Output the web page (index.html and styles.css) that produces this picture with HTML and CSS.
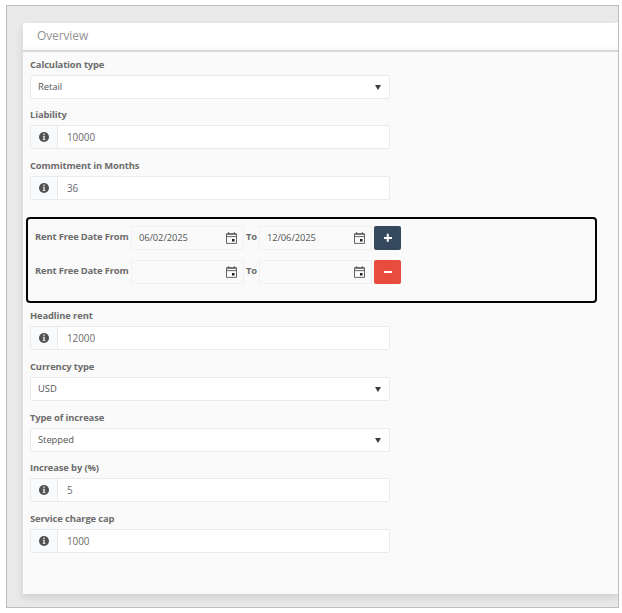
FILE: index.html
```html
<!DOCTYPE html>
<html lang="en">
<head>
<meta charset="utf-8">
<title>Overview</title>
<link rel="stylesheet" href="styles.css">
</head>
<body>
<svg class="defs" aria-hidden="true">
  <symbol id="info" viewBox="0 0 10 10"><circle cx="5" cy="5" r="5" fill="#505050"/><path d="M4.3 1.6h1.5v1.3H4.3zM3.8 3.8h2v3.3h.6v1H3.7v-1h.6V4.7h-.5z" fill="#dcdcdc"/></symbol>
  <symbol id="cal" viewBox="0 0 11 12"><path d="M.5 2h10v9.4H.5zM.5 4.6h10M2.7 0v2M8.3 0v2" fill="none" stroke="#666" stroke-width="1"/><path d="M.5 2h10" stroke="#555" stroke-width="1.3"/><path d="M6 7h2.5v2.5H6z" fill="#222"/></symbol>
</svg>
<main class="frame">
  <section class="panel">
    <h1 class="panel-title">Overview</h1>
    <form class="panel-body">
      <div class="field"><label class="label">Calculation type</label><div class="control select"><span>Retail</span><i class="caret"></i></div></div>
      <div class="field"><label class="label">Liability</label><div class="control"><span class="addon"><svg><use href="#info"/></svg></span><span class="value">10000</span></div></div>
      <div class="field"><label class="label">Commitment in Months</label><div class="control"><span class="addon"><svg><use href="#info"/></svg></span><span class="value">36</span></div></div>
      <div class="periods">
        <div class="period"><span class="from">Rent Free Date From</span><span class="date">06/02/2025<svg><use href="#cal"/></svg></span><span class="to">To</span><span class="date">12/06/2025<svg><use href="#cal"/></svg></span><button type="button" class="btn add"></button></div>
        <div class="period"><span class="from">Rent Free Date From</span><span class="date"><svg><use href="#cal"/></svg></span><span class="to">To</span><span class="date"><svg><use href="#cal"/></svg></span><button type="button" class="btn remove"></button></div>
      </div>
      <div class="field"><label class="label">Headline rent</label><div class="control"><span class="addon"><svg><use href="#info"/></svg></span><span class="value">12000</span></div></div>
      <div class="field"><label class="label">Currency type</label><div class="control select"><span>USD</span><i class="caret"></i></div></div>
      <div class="field"><label class="label">Type of increase</label><div class="control select"><span>Stepped</span><i class="caret"></i></div></div>
      <div class="field"><label class="label">Increase by (%)</label><div class="control"><span class="addon"><svg><use href="#info"/></svg></span><span class="value">5</span></div></div>
      <div class="field"><label class="label">Service charge cap</label><div class="control"><span class="addon"><svg><use href="#info"/></svg></span><span class="value">1000</span></div></div>
    </form>
  </section>
</main>
</body>
</html>
```
FILE: styles.css
```css
* { box-sizing: border-box; }
body { margin: 0; background: #fff; font-family: "Open Sans", "Noto Sans", sans-serif; font-size: 9.4px; color: #555; overflow: hidden; }
.defs { display: none; }
.frame { width: 613px; height: 603px; margin: 5px 0 0 6px; border: 1px solid #bcbcbc; background: #e9e9e9; padding: 17px 0 0 16px; overflow: hidden; }
.panel { height: 571px; background: #fafafa; box-shadow: 0 4px 8px rgba(0,0,0,.11); }
.panel-title { margin: 0; height: 29px; padding: 0 0 2px 14px; background: linear-gradient(#fff 85%, #f8f8f8); border-bottom: 2px solid #d9d9d9; font-size: 12px; font-weight: 400; letter-spacing: -.12px; line-height: 25px; color: #929292; }
.panel-body { padding: 2.8px 0 0 7px; }
.field { width: 360px; height: 50.6px; }
.label { display: block; height: 20px; line-height: 20px; font-weight: 700; letter-spacing: -.12px; color: #6c6c6c; }
.control { display: flex; align-items: stretch; height: 24px; border: 1px solid #e8eaeb; border-radius: 2px; background: #fff; overflow: hidden; line-height: 22px; }
.select { align-items: center; justify-content: space-between; padding: 0 8px 0 7px; }
.select span { letter-spacing: -.05px; }
.caret { border: 3px solid transparent; border-top: 5px solid #3c3c3c; border-bottom: 0; margin-top: 1px; }
.addon { width: 27px; display: flex; align-items: center; justify-content: center; background: #f8fafc; border-right: 1px solid #e8eaeb; }
.addon svg { width: 10px; height: 10px; }
.value { padding-left: 9px; font-size: 9.9px; letter-spacing: -.05px; line-height: 23px; color: #6a6a6a; }
.periods { width: 571px; height: 86px; margin: 10.4px 0 3.4px -4px; border: 2px solid #050505; border-radius: 4px; padding: 7px 0 0 7px; }
.period { display: flex; height: 24px; margin-bottom: 10px; }
.from, .to { font-weight: 700; letter-spacing: -.15px; color: #6c6c6c; line-height: 22px; white-space: nowrap; }
.from { width: 96px; }
.to { width: 15px; padding-left: 2px; }
.date { display: flex; align-items: center; width: 113px; border: 1px solid #f1f1f1; padding: 0 6px 0 7px; line-height: 22px; letter-spacing: -.1px; }
.date svg { width: 11px; height: 12px; margin-left: auto; }
.btn { position: relative; width: 27px; height: 24px; margin-left: 2px; padding: 0; border: 0; border-radius: 2px; }
.add { background: #34495e; }
.remove { background: #e74c3c; }
.btn::before, .add::after { content: ""; position: absolute; left: 9.5px; top: 11.25px; width: 8px; height: 1.5px; background: #fff; }
.add::after { transform: rotate(90deg); }
```
